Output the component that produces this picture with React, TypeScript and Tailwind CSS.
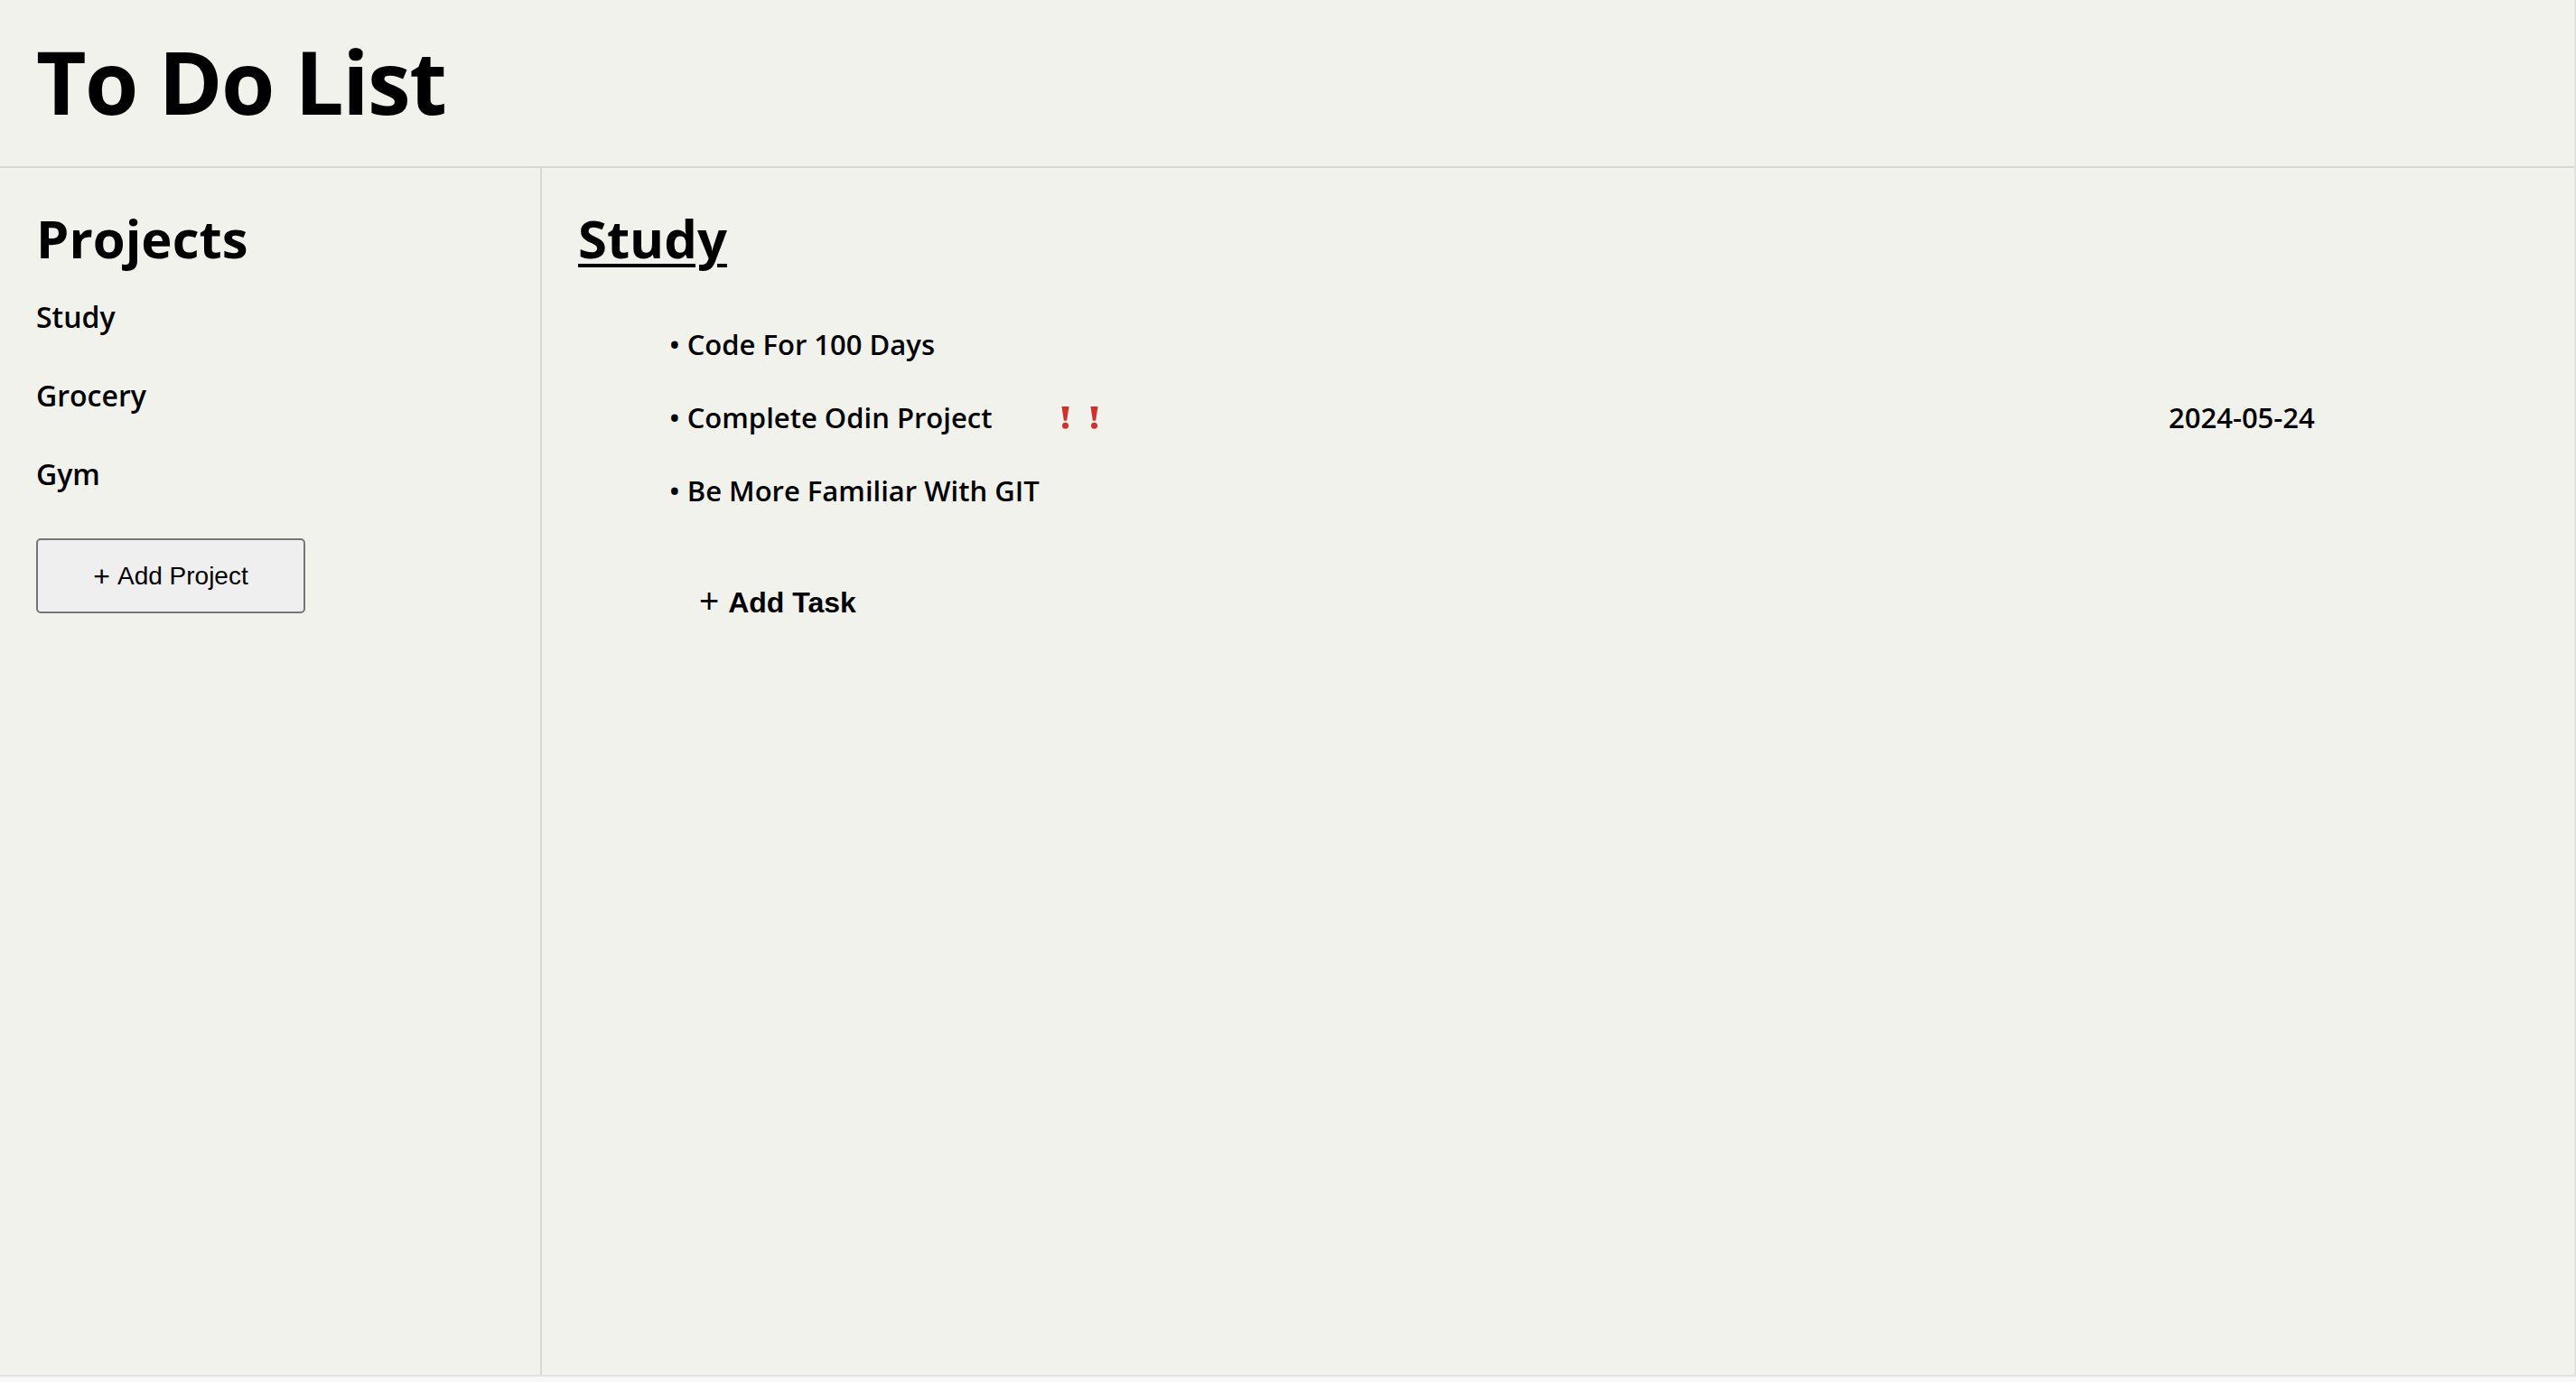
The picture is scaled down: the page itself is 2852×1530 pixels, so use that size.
import React from 'react';

const quick = { fontFamily: '"Open Sans", "Noto Sans", sans-serif' };
const arial = { fontFamily: '"Liberation Sans", Arial, sans-serif' };

function Bang() {
  return (
    <svg width="9" height="27" viewBox="0 0 10 28" className="text-[#d2302a]">
      <polygon points="0.5,0 9.5,0 6.8,17.5 3.2,17.5" fill="currentColor" />
      <circle cx="5" cy="23.8" r="3.9" fill="currentColor" />
    </svg>
  );
}

const projects = ['Study', 'Grocery', 'Gym'];

const tasks = [
  { title: 'Code For 100 Days', priority: false, date: '' },
  { title: 'Complete Odin Project', priority: true, date: '2024-05-24' },
  { title: 'Be More Familiar With GIT', priority: false, date: '' },
];

export default function App() {
  return (
    <div className="w-[2852px] h-[1530px] bg-[#f8f8f8] overflow-hidden" style={quick}>
      <div className="w-[2852px] h-[1524px] border-r-2 border-b-2 border-[#e2e2df] bg-[#f2f2ed] flex flex-col text-black">
        {/* Header */}
        <header className="h-[186px] shrink-0 border-b-2 border-[#d8d8d4] flex items-center pl-[40px]">
          <h1 className="text-[96px] font-bold leading-none tracking-[-1.5px] pb-[4px]">To Do List</h1>
        </header>

        <div className="flex flex-1">
          {/* Sidebar */}
          <aside className="w-[600px] shrink-0 border-r-2 border-[#d8d8d4] pl-[40px] pt-[44px]">
            <h2 className="text-[58px] font-bold leading-[67px]">Projects</h2>
            <ul className="mt-[34px] flex flex-col gap-[47px]">
              {projects.map((p) => (
                <li key={p} className="text-[32px] font-semibold leading-[40px]">{p}</li>
              ))}
            </ul>
            <button
              className="mt-[51px] w-[298px] h-[83px] border-2 border-[#767676] rounded-[5px] bg-[#efefef] text-[28px] text-black flex items-center justify-center"
              style={arial}
            >
              <span className="text-[32px] mr-[8px] leading-none">+</span>Add Project
            </button>
          </aside>

          {/* Main */}
          <main className="flex-1 pl-[40px] pt-[44px]">
            <h2 className="text-[58px] font-bold leading-[67px] underline decoration-[4px] underline-offset-[6px]">Study</h2>
            <ul className="mt-[64px] ml-[101px] flex flex-col gap-[41px]">
              {tasks.map((t) => (
                <li key={t.title} className="grid grid-cols-[434px_1226px_auto] items-center text-[31px] font-semibold leading-[40px]">
                  <span>• {t.title}</span>
                  <span className="flex gap-[23px] pt-[1px]">
                    {t.priority && (
                      <>
                        <Bang />
                        <Bang />
                      </>
                    )}
                  </span>
                  <span>{t.date}</span>
                </li>
              ))}
            </ul>
            <button className="mt-[82px] ml-[134px] text-[32px] font-bold leading-[40px]" style={arial}>
              <span className="text-[38px] font-normal mr-[10px]">+</span>Add Task
            </button>
          </main>
        </div>
      </div>
    </div>
  );
}
